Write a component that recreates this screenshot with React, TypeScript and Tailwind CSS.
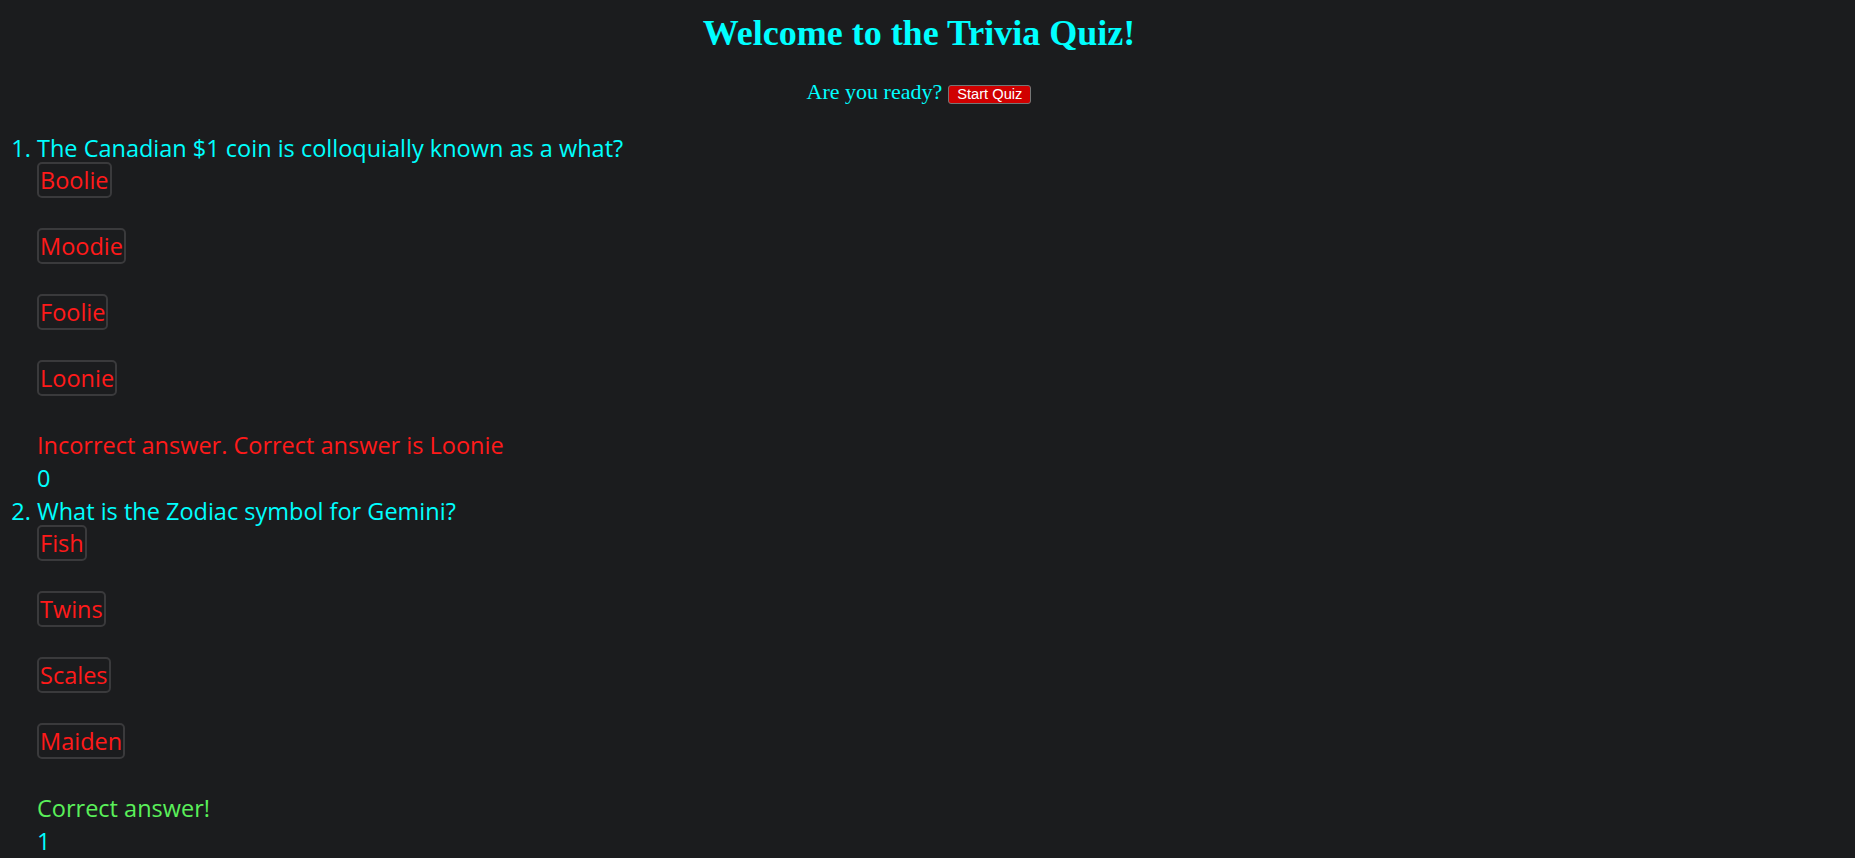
const questions = [
  {
    question: "The Canadian $1 coin is colloquially known as a what?",
    options: ["Boolie", "Moodie", "Foolie", "Loonie"],
    correct: false,
    answer: "Loonie",
    score: 0,
  },
  {
    question: "What is the Zodiac symbol for Gemini?",
    options: ["Fish", "Twins", "Scales", "Maiden"],
    correct: true,
    answer: "Twins",
    score: 1,
  },
]

export default function App() {
  return (
    <div className="h-[858px] overflow-hidden bg-[#1b1c1e] pr-[17px] text-[#00ffff]">
      <h1 className="mt-[13px] text-center font-['Liberation_Serif',serif] text-[36px] font-bold leading-[40px]">
        Welcome to the Trivia Quiz!
      </h1>
      <p className="mt-[27px] text-center font-['Liberation_Serif',serif] text-[22px] leading-[24px]">
        Are you ready?
        <button className="ml-[6px] inline-block h-[19px] rounded-[3px] border border-[#767676] bg-[#d00000] px-[8px] font-['Liberation_Sans',sans-serif] text-[14.67px] leading-[17px] text-white">
          Start Quiz
        </button>
      </p>

      <ol className="mt-[28px] list-decimal pl-[37px] font-['Open_Sans',sans-serif] text-[23.5px] leading-[33px]">
        {questions.map((q) => (
          <li key={q.question}>
            <div>{q.question}</div>
            <div className="-mt-[3px] flex flex-col items-start gap-[30px]">
              {q.options.map((opt) => (
                <button
                  key={opt}
                  className="h-[36px] rounded-[5px] border-2 border-[#3a3a3c] bg-transparent px-[1px] pt-[1px] leading-[31px] text-[#ff1a1a]"
                >
                  {opt}
                </button>
              ))}
            </div>
            <div className={"mt-[33px] " + (q.correct ? "text-[#5af05a]" : "text-[#ff1a1a]")}>
              {q.correct ? "Correct answer!" : `Incorrect answer. Correct answer is ${q.answer}`}
            </div>
            <div>{q.score}</div>
          </li>
        ))}
      </ol>
    </div>
  )
}
